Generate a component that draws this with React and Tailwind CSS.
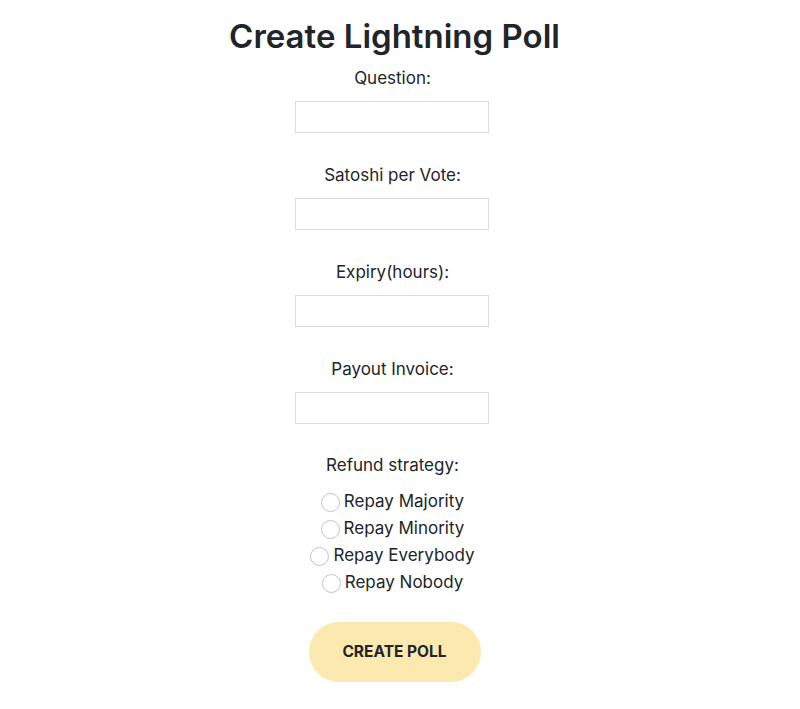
import React from 'react';

const fields = ['Question:', 'Satoshi per Vote:', 'Expiry(hours):', 'Payout Invoice:'];
const strategies = ['Repay Majority', 'Repay Minority', 'Repay Everybody', 'Repay Nobody'];

export default function App() {
    return (
        <div className="min-h-screen bg-white text-[#212529] font-['Inter',sans-serif] w-[785px] flex flex-col items-center">
            <h1 className="mt-[16px] ml-[4px] text-[33px] leading-[40px] font-semibold">Create Lightning Poll</h1>
            <form className="flex flex-col items-center">
                {fields.map((f) => (
                    <div key={f} className="flex flex-col items-center mt-[10px] mb-[20px]">
                        <label className="text-[17px] leading-[24px]">{f}</label>
                        <input type="text" className="mt-[11px] -ml-[2px] w-[194px] h-[32px] border border-[#dcdcdc] bg-white outline-none" />
                    </div>
                ))}
                <div className="flex flex-col items-center mt-[9px]">
                    <label className="text-[17px] leading-[24px]">Refund strategy:</label>
                    <div className="mt-[11px] flex flex-col items-center">
                        {strategies.map((s) => (
                            <label key={s} className="flex items-center h-[27px] text-[17px]">
                                <span className="w-[19px] h-[19px] rounded-full border border-[#c4c4c4] bg-white mr-[4px] mt-[2px]" />
                                {s}
                            </label>
                        ))}
                    </div>
                </div>
                <button type="button" className="mt-[26px] ml-[4px] w-[172px] h-[60px] rounded-full bg-[#fce9b0] text-[15.5px] font-bold uppercase text-[#212529]">
                    Create Poll
                </button>
            </form>
        </div>
    );
}
